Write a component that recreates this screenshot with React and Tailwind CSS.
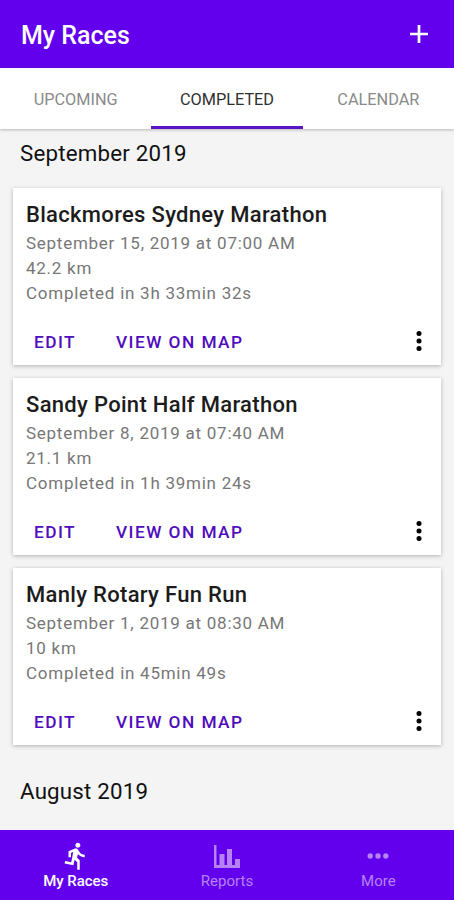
import React from "react";
import { MdDirectionsRun } from "react-icons/md";

const races = [
  { name: "Blackmores Sydney Marathon", date: "September 15, 2019 at 07:00 AM", distance: "42.2 km", result: "Completed in 3h 33min 32s" },
  { name: "Sandy Point Half Marathon", date: "September 8, 2019 at 07:40 AM", distance: "21.1 km", result: "Completed in 1h 39min 24s" },
  { name: "Manly Rotary Fun Run", date: "September 1, 2019 at 08:30 AM", distance: "10 km", result: "Completed in 45min 49s" },
];

function ReportsIcon() {
  return (
    <svg width="26" height="23" viewBox="0 0 26 23" fill="currentColor">
      <path d="M0 0h2.500v20h23.500v3H0z" />
      <path d="M5.500 9h5v12h-5zM13 4h5v17h-5zM21 14h5v7h-5z" />
    </svg>
  );
}

function Dots({ vertical = false }) {
  return vertical ? (
    <svg width="6" height="22" viewBox="0 0 6 22" fill="currentColor">
      <circle cx="3" cy="3.500" r="2.500" />
      <circle cx="3" cy="11" r="2.500" />
      <circle cx="3" cy="18.500" r="2.500" />
    </svg>
  ) : (
    <svg width="22" height="6" viewBox="0 0 22 6" fill="currentColor">
      <circle cx="3.200" cy="3" r="2.700" />
      <circle cx="11" cy="3" r="2.700" />
      <circle cx="18.800" cy="3" r="2.700" />
    </svg>
  );
}

function RaceCard({ race }) {
  return (
    <article className="h-[177px] bg-white px-[13px] pt-[13px] shadow-[0_1px_4px_rgba(0,0,0,0.28)]">
      <h3 className="whitespace-nowrap text-[22px] leading-[28px] font-medium tracking-[0.310px] text-[#1c1c1c]">{race.name}</h3>
      <div className="whitespace-nowrap pt-[2px] text-[17px] leading-[25px] tracking-[0.740px] text-[#777]">
        <p>{race.date}</p>
        <p>{race.distance}</p>
        <p>{race.result}</p>
      </div>
      <div className="mt-[24px] flex h-[24px] items-center pl-2 pr-[6px] text-[17.300px] font-medium tracking-[1.450px] text-[#4f0cbd]">
        <button className="w-[82px] pt-[1px] text-left">EDIT</button>
        <button className="whitespace-nowrap pt-[1px]">VIEW ON MAP</button>
        <button className="ml-auto pb-[2px] text-black"><Dots vertical /></button>
      </div>
    </article>
  );
}

export default function App() {
  return (
    <div className="flex h-[900px] w-[454px] flex-col overflow-hidden bg-[#f4f4f4] font-['Roboto',sans-serif]">
      <header className="flex h-[68px] shrink-0 items-center justify-between bg-[#6200ee] pl-[21px] pr-[26px] text-white">
        <h1 className="pt-[3px] text-[25px] font-medium">My Races</h1>
        <svg width="18" height="18" viewBox="0 0 18 18" stroke="currentColor" strokeWidth="2.700">
          <path d="M0 9h18M9 0v18" />
        </svg>
      </header>
      <nav className="z-10 grid h-[61px] shrink-0 grid-cols-3 bg-white text-center text-[16.300px] text-[#8a8a8a] shadow-[0_1px_3px_rgba(0,0,0,0.25)]">
        <button className="border-b-[3px] border-transparent pt-[6px]">UPCOMING</button>
        <button className="border-b-[3px] border-[#5a14c8] pt-[6px] text-[#303030]">COMPLETED</button>
        <button className="border-b-[3px] border-transparent pt-[6px]">CALENDAR</button>
      </nav>
      <main className="flex-1 overflow-hidden px-[13px]">
        <h2 className="h-[59px] pl-[7px] pt-[9px] text-[22.300px] leading-[30px] font-[450] tracking-[0.200px] text-[#111]">September 2019</h2>
        <div className="flex flex-col gap-[13px]">
          {races.map((race) => <RaceCard key={race.name} race={race} />)}
        </div>
        <h2 className="pl-[7px] pt-[31px] text-[22.300px] leading-[30px] font-[450] tracking-[0.200px] text-[#111]">August 2019</h2>
      </main>
      <footer className="grid h-[70px] shrink-0 grid-cols-3 bg-[#6200ee] text-[15px] leading-[18px] text-[#b583f7]">
        <button className="flex flex-col items-center pt-[10px] font-medium text-white">
          <span className="flex h-[32px] items-center"><MdDirectionsRun size={30} /></span>
          <span className="tracking-[-0.050px]">My Races</span>
        </button>
        <button className="flex flex-col items-center pt-[10px]">
          <span className="flex h-[32px] items-center"><ReportsIcon /></span>
          <span>Reports</span>
        </button>
        <button className="flex flex-col items-center pt-[10px]">
          <span className="flex h-[32px] items-center"><Dots /></span>
          <span>More</span>
        </button>
      </footer>
    </div>
  );
}
